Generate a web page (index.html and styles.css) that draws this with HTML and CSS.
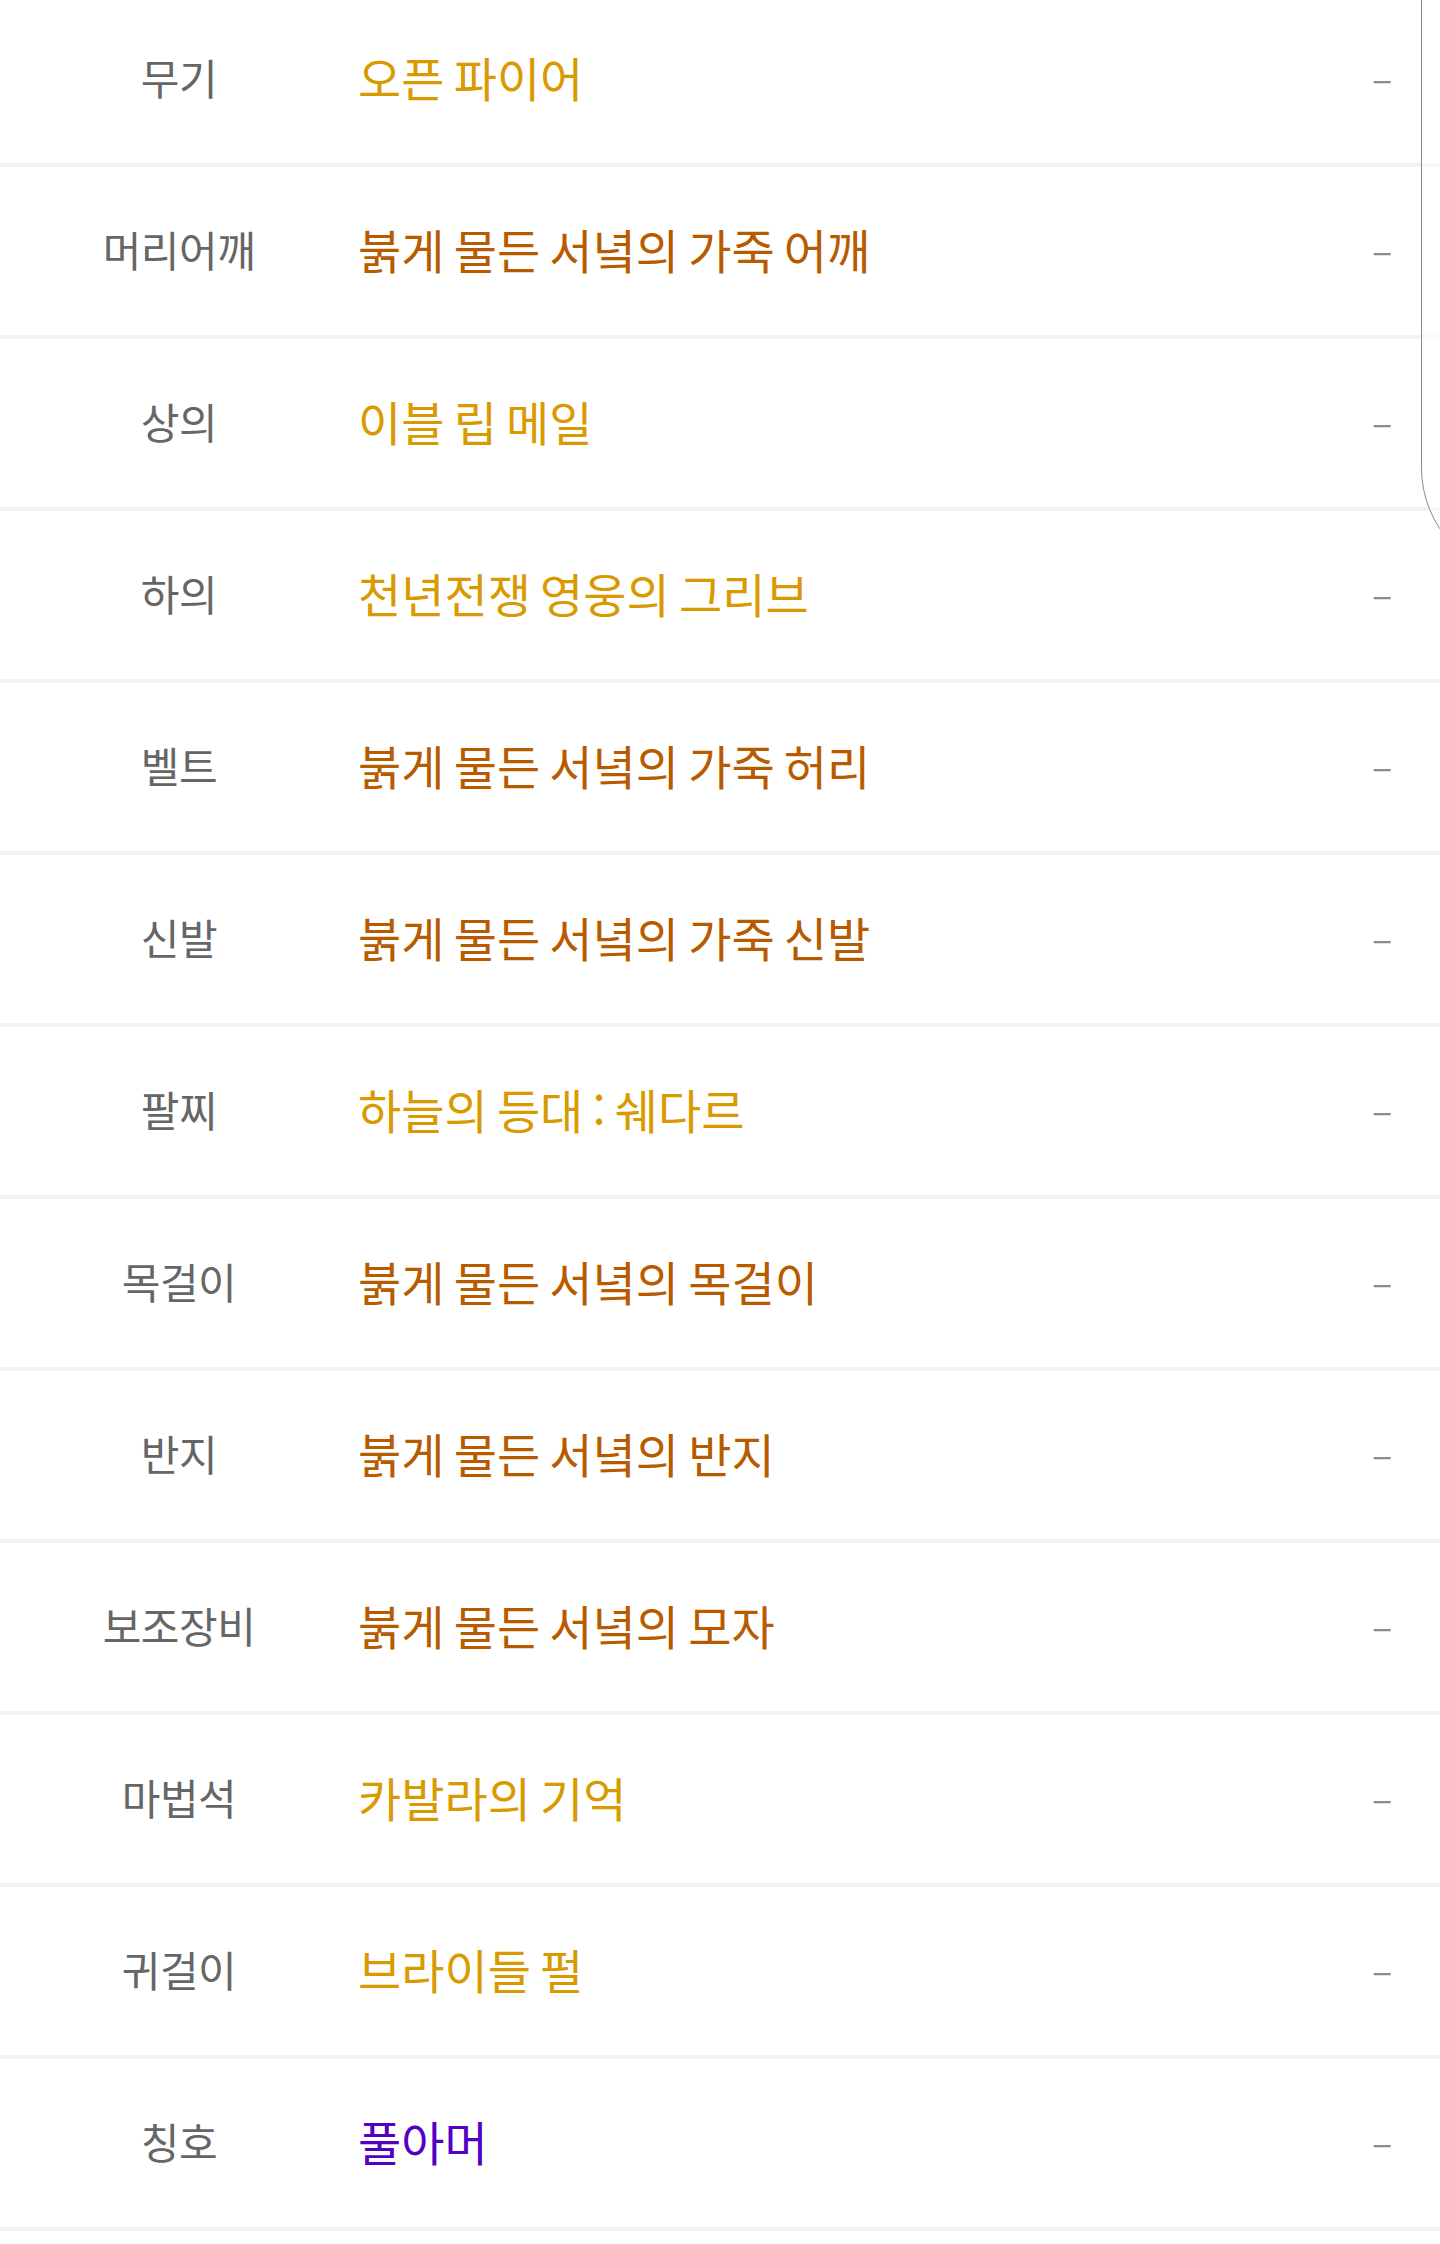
FILE: index.html
```html
<!DOCTYPE html>
<html lang="ko">
<head>
  <meta charset="UTF-8">
  <title>장착 장비</title>
  <meta name="viewport" content="width=device-width, initial-scale=1.0">
  <link rel="stylesheet" href="styles.css">
</head>
<body>
  <div class="equip-list">
    <div class="equip-row">
      <div class="slot">무기</div>
      <div class="item legendary">오픈 파이어</div>
      <div class="extra">–</div>
    </div>
    <div class="equip-row">
      <div class="slot">머리어깨</div>
      <div class="item relic">붉게 물든 서녘의 가죽 어깨</div>
      <div class="extra">–</div>
    </div>
    <div class="equip-row">
      <div class="slot">상의</div>
      <div class="item legendary">이블 립 메일</div>
      <div class="extra">–</div>
    </div>
    <div class="equip-row">
      <div class="slot">하의</div>
      <div class="item legendary">천년전쟁 영웅의 그리브</div>
      <div class="extra">–</div>
    </div>
    <div class="equip-row">
      <div class="slot">벨트</div>
      <div class="item relic">붉게 물든 서녘의 가죽 허리</div>
      <div class="extra">–</div>
    </div>
    <div class="equip-row">
      <div class="slot">신발</div>
      <div class="item relic">붉게 물든 서녘의 가죽 신발</div>
      <div class="extra">–</div>
    </div>
    <div class="equip-row">
      <div class="slot">팔찌</div>
      <div class="item legendary">하늘의 등대 : 쉐다르</div>
      <div class="extra">–</div>
    </div>
    <div class="equip-row">
      <div class="slot">목걸이</div>
      <div class="item relic">붉게 물든 서녘의 목걸이</div>
      <div class="extra">–</div>
    </div>
    <div class="equip-row">
      <div class="slot">반지</div>
      <div class="item relic">붉게 물든 서녘의 반지</div>
      <div class="extra">–</div>
    </div>
    <div class="equip-row">
      <div class="slot">보조장비</div>
      <div class="item relic">붉게 물든 서녘의 모자</div>
      <div class="extra">–</div>
    </div>
    <div class="equip-row">
      <div class="slot">마법석</div>
      <div class="item legendary">카발라의 기억</div>
      <div class="extra">–</div>
    </div>
    <div class="equip-row">
      <div class="slot">귀걸이</div>
      <div class="item legendary">브라이들 펄</div>
      <div class="extra">–</div>
    </div>
    <div class="equip-row">
      <div class="slot">칭호</div>
      <div class="item epic">풀아머</div>
      <div class="extra">–</div>
    </div>
  </div>

  <!-- edge of the floating panel on the right -->
  <div class="side-panel"></div>
</body>
</html>
```

FILE: styles.css
```css
html, body {
  margin: 0;
  padding: 0;
}
body {
  background: #ffffff;
  font-family: "Noto Sans CJK KR", "Noto Sans", sans-serif;
  overflow: hidden;
  position: relative;
  height: 2244px;
}
.equip-list {
  margin-top: -5px;
}
.equip-row {
  display: flex;
  align-items: center;
  height: 168px;
  border-bottom: 4px solid #f2f2f2;
}
.slot {
  width: 358px;
  flex-shrink: 0;
  text-align: center;
  font-size: 42px;
  letter-spacing: -0.5px;
  color: #666666;
  padding-bottom: 6px;
}
.item {
  flex: 1;
  font-size: 47px;
  word-spacing: -4px;
  padding-bottom: 6px;
}
.item.legendary {
  color: #d89a00;
}
.item.relic {
  color: #b85b00;
}
.item.epic {
  color: #5200c4;
}
.extra {
  width: 68px;
  flex-shrink: 0;
  font-size: 38px;
  color: #8c8c8c;
  padding-bottom: 6px;
}
.side-panel {
  position: absolute;
  left: 1421px;
  top: -40px;
  width: 200px;
  height: 616px;
  border: 1.5px solid #8a8a8a;
  border-radius: 0 0 0 110px;
  background: rgba(255, 255, 255, 0.55);
}
```
